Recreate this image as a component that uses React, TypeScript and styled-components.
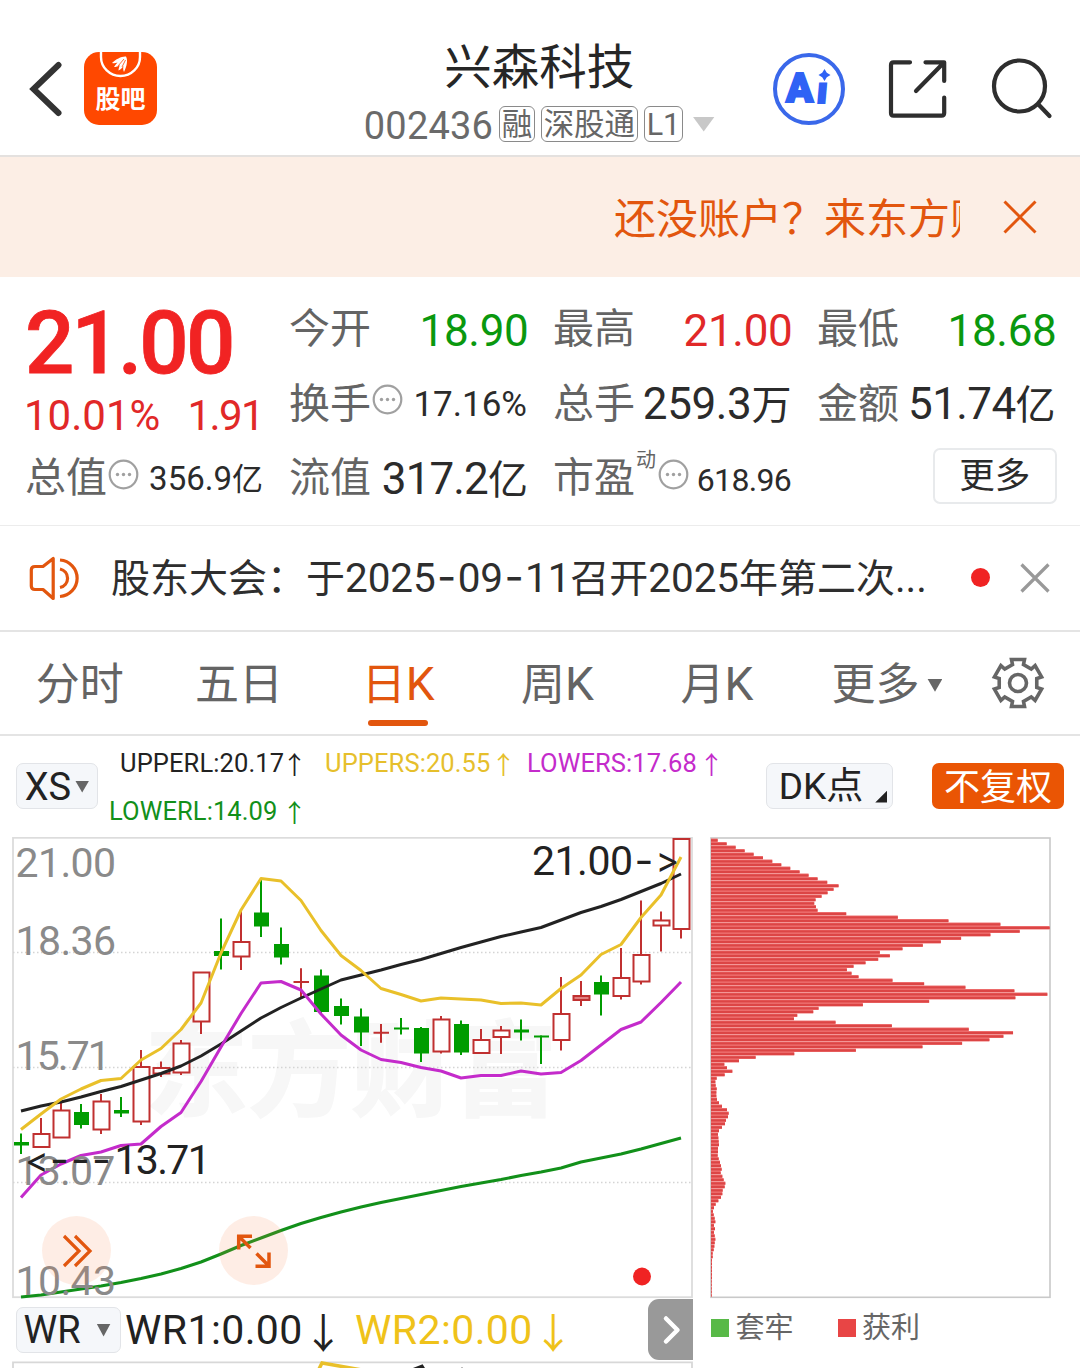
import React from "react";
import styled, { createGlobalStyle } from "styled-components";

const ACCENT = "#e2560e";
const RED = "#e12828";
const GREEN = "#0a980e";
const INK = "#2b2b2b";
const MUTED = "#646464";

const Global = createGlobalStyle`
  * { box-sizing: border-box; }
  body { margin: 0; background: #fff; overflow: hidden; }
`;

const Page = styled.div`
  width: 1080px;
  height: 1368px;
  overflow: hidden;
  background: #fff;
  color: ${INK};
  font-family: Roboto, "Noto Sans CJK SC", sans-serif;
  white-space: nowrap;
`;

const Icon = styled.svg`
  display: block;
  flex: none;
  fill: none;
`;

/* ---------- header ---------- */
const Header = styled.header`
  display: grid;
  grid-template-columns: 360px 357px 363px;
  height: 156.5px;
  border-bottom: 2px solid #e4e1df;
`;
const HeaderLeft = styled.div`
  display: flex;
  align-items: center;
  gap: 22px;
  padding: 23px 0 0 28px;
`;
const HeaderRight = styled.div`
  display: flex;
  align-items: center;
  gap: 42px;
  padding: 23px 0 0 54.5px;
`;
const TitleBlock = styled.div`
  display: flex;
  flex-direction: column;
  align-items: center;
  padding: 38px 0 0 1.5px;
`;
const Title = styled.h1`
  margin: 0;
  font-size: 47.5px;
  font-weight: 400;
  line-height: 61px;
  color: #262626;
`;
const CodeRow = styled.div`
  display: flex;
  align-items: center;
  height: 50px;
  gap: 5.5px;
`;
const Code = styled.span`
  font-size: 38px;
  line-height: 50px;
  padding-top: 3px;
  color: #6a6a6a;
  letter-spacing: 0.2px;
`;
const Tag = styled.span`
  height: 36px;
  padding: 0 2px;
  border: 1.5px solid #8a8a8a;
  border-radius: 6px;
  font-size: 30.5px;
  line-height: 36px;
  color: #666;
`;
const Triangle = styled.i<{ $w: number; $h: number; $c: string; $ml?: number }>`
  flex: none;
  width: ${(p) => p.$w}px;
  height: ${(p) => p.$h}px;
  margin-left: ${(p) => p.$ml ?? 0}px;
  background: ${(p) => p.$c};
  clip-path: polygon(0 0, 100% 0, 50% 100%);
`;

/* ---------- banner ---------- */
const Banner = styled.div`
  display: flex;
  align-items: center;
  height: 120px;
  padding-left: 614px;
  background: #fceee5;
`;
const BannerText = styled.div`
  width: 346px;
  margin-right: 43px;
  overflow: hidden;
  font-size: 42px;
  line-height: 60px;
  padding-top: 6px;
  color: ${ACCENT};
`;

/* ---------- quote ---------- */
const Quote = styled.section`
  display: grid;
  grid-template-columns: repeat(4, 238px);
  grid-template-rows: repeat(3, 74.5px);
  column-gap: 26px;
  height: 249.5px;
  padding: 17px 25px 0;
  border-bottom: 1.5px solid #ececec;
`;
const PriceCell = styled.div`
  grid-row: span 2;
  display: flex;
  flex-direction: column;
`;
const Price = styled.div`
  height: 97px;
  font-size: 87px;
  font-weight: 500;
  line-height: 98px;
  letter-spacing: -2.9px;
  margin-left: 0;
  color: #f12323;
  -webkit-text-stroke: 0.8px #f12323;
`;
const Change = styled.div`
  display: flex;
  justify-content: space-between;
  font-size: 42px;
  line-height: 50px;
  margin-left: -1px;
  color: ${RED};
`;
const ChangeAmount = styled.span`
  letter-spacing: -1.6px;
`;
const Cell = styled.div`
  display: flex;
  align-items: center;
  height: 74.5px;
`;
const Label = styled.span`
  font-size: 41px;
  line-height: 60px;
  padding-bottom: 3px;
  color: ${MUTED};
`;
const Value = styled.span<{ $size?: number; $c?: string; $ls?: number }>`
  margin-left: auto;
  margin-right: ${(p) => (p.$c ? -1.5 : 0)}px;
  font-size: ${(p) => p.$size ?? 44}px;
  line-height: 60px;
  letter-spacing: ${(p) => p.$ls ?? 0}px;
  color: ${(p) => p.$c ?? INK};
`;
const Unit = styled.span<{ $size: number }>`
  font-size: ${(p) => p.$size}px;
`;
const Sup = styled.sup`
  align-self: flex-start;
  font-size: 20px;
  line-height: 24px;
  margin: 5px 1px 0 1px;
  color: ${MUTED};
`;
const DotsIcon = styled(Icon)`
  margin: -11px 0 0 1px;
`;
const MoreButton = styled.button`
  width: 124.5px;
  height: 56px;
  margin: -7px -2px 0 auto;
  padding: 0;
  flex: none;
  border: 2px solid #e8eaec;
  border-radius: 7px;
  background: #fff;
  font: 35.5px/50px Roboto, "Noto Sans CJK SC", sans-serif;
  color: ${INK};
`;

/* ---------- news ---------- */
const News = styled.section`
  display: flex;
  align-items: center;
  height: 105.5px;
  padding-left: 28px;
  border-bottom: 2px solid #e4e4e4;
`;
const NewsText = styled.div`
  width: 870px;
  padding-left: 29px;
  font-size: 39px;
  line-height: 60px;
  color: #2e2e2e;
`;
const Num = styled.span`
  font-size: 40.5px;
  letter-spacing: -0.1px;
`;
const Dash = styled.span`
  font-family: Inter, sans-serif;
  font-size: 42px;
  padding: 0 1.4px;
`;
const RedDot = styled.i`
  width: 19px;
  height: 19px;
  margin: 0 30px 0 19px;
  border-radius: 50%;
  background: #f02323;
`;

/* ---------- tabs ---------- */
const Tabs = styled.nav`
  display: flex;
  align-items: center;
  height: 104.5px;
  border-bottom: 2px solid #e4e4e4;
`;
const Tab = styled.div<{ $active?: boolean; $w?: number }>`
  display: flex;
  flex-direction: column;
  align-items: center;
  justify-content: flex-end;
  width: ${(p) => p.$w ?? 159.3}px;
  height: 102px;
  font-size: 44px;
  line-height: 60px;
  color: ${(p) => (p.$active ? ACCENT : MUTED)};
  &::after {
    content: "";
    width: 60px;
    height: 6px;
    margin: 4.5px 0 8px;
    border-radius: 3px;
    background: ${(p) => (p.$active ? ACCENT : "transparent")};
  }
`;
const TabLabel = styled.span`
  display: flex;
  align-items: center;
  gap: 8px;
`;
const Latin = styled.span`
  font-size: 46px;
`;
const GearIcon = styled(Icon)`
  margin-left: 14px;
`;

/* ---------- indicator bar ---------- */
const IndicatorBar = styled.section`
  display: flex;
  height: 101px;
  padding: 0 16px;
`;
const Chip = styled.button<{ $w: number; $size: number; $solid?: boolean; $gap?: number; $pad?: number }>`
  display: flex;
  align-items: center;
  justify-content: center;
  gap: ${(p) => p.$gap ?? 4}px;
  flex: none;
  width: ${(p) => p.$w}px;
  height: 46px;
  padding: ${(p) => (p.$solid ? 3 : 1)}px ${(p) => p.$pad ?? 0}px 0 0;
  border: ${(p) => (p.$solid ? "0" : "1.5px solid #e2e4e8")};
  border-radius: 7px;
  background: ${(p) => (p.$solid ? "#ea5504" : "#f5f7fa")};
  color: ${(p) => (p.$solid ? "#fff" : "#222")};
  font: ${(p) => p.$size}px/44px Roboto, "Noto Sans CJK SC", sans-serif;
`;
const ChipSlot = styled.div<{ $ml?: number }>`
  padding-top: 27px;
  margin-left: ${(p) => p.$ml ?? 0}px;
`;
const Corner = styled.i`
  align-self: flex-end;
  width: 12px;
  height: 12px;
  margin: 0 -7px 5.5px 8px;
  background: #222;
  clip-path: polygon(100% 0, 100% 100%, 0 100%);
`;
const Legends = styled.div`
  display: flex;
  flex-wrap: wrap;
  align-content: flex-start;
  width: 668px;
  padding: 3px 0 0 11px;
`;
const Legend = styled.span<{ $c: string; $w: number; $ml?: number }>`
  display: flex;
  width: ${(p) => p.$w}px;
  margin-left: ${(p) => p.$ml ?? 0}px;
  color: ${(p) => p.$c};
  font-size: 25.5px;
  line-height: 48px;
  letter-spacing: 0.1px;
`;
const LegendText = styled.span<{ $w: number }>`
  width: ${(p) => p.$w}px;
`;
const Arrow = styled.span<{ $size: number }>`
  font-family: "Noto Sans CJK SC", sans-serif;
  font-size: ${(p) => p.$size}px;
`;

/* ---------- charts ---------- */
const Charts = styled.section`
  display: flex;
  gap: 17px;
`;
const LeftPane = styled.div`
  width: 693px;
`;
const ChartBox = styled.div`
  position: relative;
  height: 461.5px;
  padding-left: 12px;
`;
const RoundButton = styled.button<{ $x: number }>`
  position: absolute;
  left: ${(p) => p.$x}px;
  top: 379px;
  display: flex;
  align-items: center;
  justify-content: center;
  width: 69px;
  height: 69px;
  padding: 0;
  border: 0;
  border-radius: 50%;
  background: rgba(250, 130, 70, 0.14);
`;
const WrRow = styled.div`
  display: flex;
  align-items: center;
  height: 62px;
  padding-left: 16px;
`;
const WrValue = styled.div<{ $c: string; $w: number }>`
  display: flex;
  width: ${(p) => p.$w}px;
  padding-left: 4px;
  font-size: 41px;
  line-height: 54px;
  letter-spacing: 0.4px;
  color: ${(p) => p.$c};
`;
const NextButton = styled.button`
  display: flex;
  align-items: center;
  justify-content: center;
  width: 45px;
  height: 61px;
  margin-left: auto;
  padding: 0 0 0 3px;
  border: 0;
  border-radius: 11px 0 0 11px;
  background: #999;
`;
const SideLegend = styled.div`
  display: flex;
  align-items: center;
  gap: 44px;
  height: 58px;
  padding-left: 1px;
`;
const SideItem = styled.span<{ $c: string }>`
  display: flex;
  align-items: center;
  gap: 6.5px;
  font-size: 29px;
  line-height: 40px;
  color: #666;
  &::before {
    content: "";
    width: 18px;
    height: 18px;
    background: ${(p) => p.$c};
  }
`;

/* [up, high, top, bottom, low] in chart pixels */
const candles: [number, number, number, number, number][] = [
  [0, 1133.5, 1142, 1145.5, 1154], [1, 1118, 1134, 1147, 1147], [1, 1102, 1110.5, 1137.5, 1138],
  [0, 1104, 1112, 1125, 1128.5], [1, 1094, 1101.5, 1129.5, 1134], [0, 1097, 1110, 1113.5, 1117],
  [1, 1050, 1067, 1121.5, 1125], [1, 1061.5, 1068, 1073.5, 1077], [1, 1040, 1043.5, 1072.5, 1075],
  [1, 972, 972.5, 1021.5, 1034], [0, 918.5, 951, 956, 969.5], [1, 911, 942, 956.5, 970],
  [0, 880, 912.5, 926.5, 937], [0, 927.5, 944, 957.5, 964.5], [1, 968.5, 981.5, 982.5, 997],
  [0, 969.5, 975.5, 1012, 1013], [0, 998.5, 1006, 1016, 1024.5], [0, 1008.5, 1016.5, 1032.5, 1046],
  [1, 1024, 1032, 1033.5, 1042.5], [0, 1018, 1027.5, 1029.5, 1034.5], [0, 1027, 1028, 1053.5, 1062],
  [1, 1016, 1019.5, 1051.5, 1053.5], [0, 1020.5, 1024, 1052.5, 1055], [1, 1029, 1040, 1053, 1054],
  [1, 1026, 1030.5, 1037, 1054], [0, 1019.5, 1029.5, 1032.5, 1040.5], [0, 1035.5, 1035.5, 1037.5, 1064],
  [1, 977, 1014, 1040, 1050.5], [1, 981, 996, 1000, 1006], [0, 975.5, 982, 994.5, 1015.5],
  [1, 948, 978, 996, 999.5], [1, 900.5, 955, 981.5, 984.5], [1, 911.5, 920.5, 925.5, 951.5],
  [1, 838.5, 839, 929, 938.5],
];

const upperS = [1129.5, 1114, 1099, 1089, 1080.5, 1078.5, 1060, 1048.5, 1029.5, 1003, 953, 910, 878.5, 881, 900.5, 930.5, 955.5, 970.5, 988.5, 994.5, 1001, 998, 999, 1000, 1003.5, 1003, 1005, 988.5, 975, 954.5, 944.5, 917.5, 895, 857];
const upperL = [1111, 1106, 1102, 1097, 1091.5, 1086.5, 1080, 1073.5, 1066, 1056, 1044, 1031, 1018, 1007.5, 998, 989, 980, 975, 970, 964.5, 959.5, 953.5, 947.5, 942, 936.5, 932, 927.5, 920, 912.5, 906.5, 899.5, 891.5, 883.5, 874];
const lowerS = [1197.5, 1175, 1164, 1155.5, 1152, 1145.5, 1144, 1126.5, 1112.5, 1081.5, 1047, 1013.5, 983, 981.5, 990, 1014, 1035, 1050, 1059.5, 1062.5, 1067.5, 1071, 1078, 1075.5, 1075.5, 1071, 1074, 1072.5, 1060.5, 1045, 1029.5, 1022, 1002.5, 982];
const lowerL = [1297, 1295, 1292, 1289, 1286, 1282.5, 1278.5, 1274, 1268.5, 1262, 1254, 1245.5, 1238, 1230.5, 1223.5, 1217.5, 1212, 1207, 1202.5, 1198.5, 1194.5, 1190.5, 1186.5, 1183, 1179.5, 1175.5, 1172, 1168, 1162, 1158, 1154, 1149, 1143.5, 1138];

const toPoints = (ys: number[]) => ys.map((y, i) => `${21 + i * 20},${y}`).join(" ");

/* cost distribution: bar ends on a 1018-unit scale starting at 33 */
const chips = [53, 80, 107, 134, 161, 189, 217, 244, 271, 299, 326, 353, 382, 416, 401, 383, 365, 347, 343, 348, 353, 439, 594, 746, 902, 1050, 960, 872, 784, 723, 669, 608, 540, 570, 535, 497, 461, 441, 455, 476, 578, 673, 797, 944, 1043, 947, 688, 489, 356, 340, 292, 282, 407, 576, 807, 940, 911, 869, 787, 668, 468, 283, 167, 117, 73, 81, 97, 74, 50, 46, 47, 50, 49, 49, 51, 57, 66, 81, 86, 84, 78, 75, 66, 57, 54, 55, 56, 57, 54, 54, 53, 56, 60, 63, 65, 62, 67, 71, 76, 74, 68, 67, 63, 55, 47, 42, 39, 41, 44, 46, 42, 45, 42, 44, 46, 44, 43, 41, 38, 38, 36, 36, 36, 36, 36, 36, 35, 35, 35, 35, 35];

/* [label, baseline, letter spacing] */
const axis: [string, number, number][] = [
  ["21.00", 877, -0.6],
  ["18.36", 954.5, -0.6],
  ["15.71", 1069.5, -1.9],
  ["13.07", 1184.5, -0.8],
  ["10.43", 1295, -0.6],
];

const gearPath = (() => {
  const pts: string[] = [];
  for (let k = 0; k < 6; k++) {
    const a = ((k * 60 - 90) * Math.PI) / 180;
    for (const [u, v] of [[18.5, -5.5], [23.5, -6.5], [23.5, 6.5], [18.5, 5.5]]) {
      pts.push(`${(27 + u * Math.cos(a) - v * Math.sin(a)).toFixed(2)} ${(27 + u * Math.sin(a) + v * Math.cos(a)).toFixed(2)}`);
    }
  }
  return `M${pts.join("L")}Z`;
})();

const Dots = () => (
  <DotsIcon width="31" height="31" viewBox="0 0 31 31">
    <circle cx="15.5" cy="15.5" r="13.8" stroke="#a0a0a0" strokeWidth="2.2" />
    {[9.5, 15.5, 21.5].map((x) => <circle key={x} cx={x} cy="15.5" r="1.7" fill="#a0a0a0" />)}
  </DotsIcon>
);

const Cross = ({ size, color, width }: { size: number; color: string; width: number }) => (
  <Icon width={size} height={size} viewBox={`0 0 ${size} ${size}`} stroke={color} strokeWidth={width}>
    <path d={`M1.5 1.5L${size - 1.5} ${size - 1.5}M${size - 1.5} 1.5L1.5 ${size - 1.5}`} />
  </Icon>
);

const KChart = () => (
  <Icon width="681" height="461.5" viewBox="12 837 681 461.5">
    <text x="145" y="1108" fontSize="103" fontWeight="700" fill="#f7f7f7" stroke="#f7f7f7" strokeWidth="2" fontFamily="Noto Sans CJK SC">东方财富</text>
    <rect x="13" y="837.8" width="679" height="459.4" stroke="#dcdcdc" strokeWidth="1.8" />
    {[952.5, 1067.5, 1182.5].map((y) => (
      <path key={y} d={`M13 ${y}H692`} stroke="#d4d4d4" strokeWidth="1.5" strokeDasharray="1.5 2.5" />
    ))}
    {candles.map(([up, hi, top, bot, lo], i) => {
      const x = 21 + i * 20;
      return up ? (
        <g key={i} stroke="#c03030" strokeWidth="2">
          <path d={`M${x} ${hi}V${top}M${x} ${bot}V${lo}`} />
          {bot - top < 2 ? (
            <path d={`M${x - 7.5} ${(top + bot) / 2}H${x + 8}M${x} ${hi}V${lo}`} />
          ) : (
            <rect x={x - 7.5} y={top} width="16" height={bot - top} fill={bot - top < 5 ? "#e08080" : "#fff"} />
          )}
        </g>
      ) : (
        <g key={i} fill="#009c00">
          <rect x={x - 1} y={hi} width="2" height={lo - hi} />
          <rect x={x - 7} y={top} width="15" height={bot - top} />
        </g>
      );
    })}
    <g strokeWidth="3" strokeLinejoin="round">
      <polyline points={toPoints(upperL)} stroke="#222" />
      <polyline points={toPoints(upperS)} stroke="#e9c02a" />
      <polyline points={toPoints(lowerS)} stroke="#c42bcb" />
      <polyline points={toPoints(lowerL)} stroke="#12901a" />
    </g>
    <g fontSize="41" fontFamily="Roboto">
      {axis.map(([t, y, ls]) => <text key={t} x="15.5" y={y} fill="#8a8a8a" letterSpacing={ls}>{t}</text>)}
      <g fill="#222">
        <text x="532" y="875" letterSpacing="-0.5">
          21.00<tspan fontFamily="Inter" x="634.5">-</tspan><tspan fontFamily="Inter" fontSize="36" x="655.5" y="873">&gt;</tspan>
        </text>
        <text y="1174.500">
          <tspan fontFamily="Inter" fontSize="36" x="25" y="1172.500">&lt;</tspan><tspan fontFamily="Inter" y="1173.500" x="50 71 92">---</tspan><tspan x="114.500" y="1174" letterSpacing="-1.7">13.71</tspan>
        </text>
      </g>
    </g>
    <circle cx="642" cy="1276.5" r="9" fill="#f02323" />
  </Icon>
);

const ChipChart = () => (
  <Icon width="342" height="461.5" viewBox="710 837 342 461.5">
    <rect x="711" y="838" width="339" height="459.3" stroke="#c9c9c9" strokeWidth="1.6" />
    {chips.map((end, i) => {
      const y = 838.5 + i * 3.5;
      const w = (end - 33) / 3.003;
      return (
        <g key={i}>
          <rect x="711" y={y} width={w} height="3.5" fill="#f07474" />
          <rect x="711" y={y + 0.8} width={w} height="2.2" fill="#dc4545" />
        </g>
      );
    })}
  </Icon>
);

export default function App() {
  return (
    <Page>
      <Global />
      <Header>
        <HeaderLeft>
          <Icon width="34" height="58" viewBox="28 60 34 58" stroke="#333" strokeWidth="6" strokeLinecap="round">
            <path d="M58.5 65L33.5 89L58.5 113" strokeLinejoin="miter" />
          </Icon>
          <Icon width="73" height="73" viewBox="0 0 73 73">
            <defs><clipPath id="tile"><rect width="73" height="73" rx="15" /></clipPath></defs>
            <g clipPath="url(#tile)">
              <rect width="73" height="73" fill="#ff4800" />
              <path d="M17 -2V5A19.5 19 0 0 0 56 5V-2" stroke="#fff" strokeWidth="2.4" />
              <path d="M28 11C32 7 38 4 42 4.500C44 8 43 14 40 20C39 18 39 16 39.500 14C38 16 36.500 17.500 34.500 18.500C34.500 17 35 15 36 13C34 14.500 32 15 30 15C31 13.500 32 12 33.500 10.500C31.500 11.300 30 11.500 28 11Z" fill="#fff" />
              <path d="M34 14L40 7M38 15L41.500 8" stroke="#ff4800" strokeWidth="0.8" />
            </g>
            <text x="36.500" y="56" textAnchor="middle" fontSize="25" fontWeight="700" fill="#fff" fontFamily="Noto Sans CJK SC">股吧</text>
          </Icon>
        </HeaderLeft>
        <TitleBlock>
          <Title>兴森科技</Title>
          <CodeRow>
            <Code>002436</Code>
            <Tag>融</Tag>
            <Tag>深股通</Tag>
            <Tag>L1</Tag>
            <Triangle $w={22} $h={15} $c="#c8c8c8" $ml={4} />
          </CodeRow>
        </TitleBlock>
        <HeaderRight>
          <Icon width="74" height="74" viewBox="771.500 52 74 74">
            <circle cx="808.500" cy="89" r="34" stroke="#3a68ea" strokeWidth="4" />
            <g fill="#2f62f5" stroke="#2f62f5" fontFamily="Roboto" fontWeight="900" fontSize="40">
              <text x="785.500" y="101.500" strokeWidth="2">A</text>
              <text transform="translate(815.500 103) skewX(-5)" fontSize="37" strokeWidth="2">ı</text>
              <path d="M824 69L826.300 72.700L830 75L826.300 77.300L824 81L821.700 77.300L818 75L821.700 72.700Z" stroke="none" />
            </g>
          </Icon>
          <Icon width="60" height="60" viewBox="887 59 60 60" stroke="#2e2e2e" strokeWidth="4.200" strokeLinecap="round" strokeLinejoin="round">
            <path d="M909 62.300H892.500Q890 62.300 890 65V113Q890 115.700 892.500 115.700H940.500Q943.200 115.700 943.200 113V97.500M924.500 62.300H943.200V81M942 63.500L915 91" />
          </Icon>
          <Icon width="64" height="64" viewBox="989 57 64 64" stroke="#2e2e2e" strokeWidth="4.200" strokeLinecap="round">
            <circle cx="1018.500" cy="86" r="25.500" />
            <path d="M1037.500 104.500L1048.500 116" />
          </Icon>
        </HeaderRight>
      </Header>

      <Banner>
        <BannerText>还没账户？来东方财富</BannerText>
        <Cross size={34} color={ACCENT} width={3} />
      </Banner>

      <Quote>
        <PriceCell>
          <Price>21.00</Price>
          <Change><span>10.01%</span><ChangeAmount>1.91</ChangeAmount></Change>
        </PriceCell>
        <Cell><Label>今开</Label><Value $c={GREEN} $ls={-0.3}>18.90</Value></Cell>
        <Cell><Label>最高</Label><Value $c={RED} $ls={-0.3}>21.00</Value></Cell>
        <Cell><Label>最低</Label><Value $c={GREEN} $ls={-0.3}>18.68</Value></Cell>
        <Cell><Label>换手</Label><Dots /><Value $size={35}>17.16%</Value></Cell>
        <Cell><Label>总手</Label><Value $ls={-0.4}>259.3<Unit $size={40}>万</Unit></Value></Cell>
        <Cell><Label>金额</Label><Value $ls={-0.6}>51.74<Unit $size={40}>亿</Unit></Value></Cell>
        <Cell><Label>总值</Label><Dots /><Value $size={33}>356.9<Unit $size={31}>亿</Unit></Value></Cell>
        <Cell><Label>流值</Label><Value $ls={-0.9}>317.2<Unit $size={40}>亿</Unit></Value></Cell>
        <Cell><Label>市盈</Label><Sup>动</Sup><Dots /><Value $size={32} $ls={-0.7}>618.96</Value></Cell>
        <Cell><MoreButton>更多</MoreButton></Cell>
      </Quote>

      <News>
        <Icon width="54" height="48" viewBox="28 554 54 48" stroke={ACCENT} strokeWidth="3.200">
          <path d="M53.200 558.500V598.500L43 589.500H35Q31.300 589.500 31.300 586V570Q31.300 566.500 35 566.500H43Z" strokeLinejoin="round" />
          <path d="M60 569A9.800 9.500 0 0 1 60 587.500M60 560A18.500 18.300 0 0 1 60 596.500" />
        </Icon>
        <NewsText>
          股东大会：于<Num>2025<Dash>-</Dash>09<Dash>-</Dash>11</Num>召开<Num>2025</Num>年第二次<Num>...</Num>
        </NewsText>
        <RedDot />
        <Cross size={30} color="#999" width={3.2} />
      </News>

      <Tabs>
        <Tab><TabLabel>分时</TabLabel></Tab>
        <Tab><TabLabel>五日</TabLabel></Tab>
        <Tab $active><span>日<Latin>K</Latin></span></Tab>
        <Tab><span>周<Latin>K</Latin></span></Tab>
        <Tab><span>月<Latin>K</Latin></span></Tab>
        <Tab $w={181}><TabLabel>更多<Triangle $w={15} $h={13} $c="#666" /></TabLabel></Tab>
        <GearIcon width="54" height="54" viewBox="0 0 54 54" stroke="#666" strokeWidth="3.600">
          <path d={gearPath} />
          <circle cx="27" cy="27" r="8.500" />
        </GearIcon>
      </Tabs>

      <IndicatorBar>
        <ChipSlot><Chip $w={82} $size={38}>XS<Triangle $w={14} $h={12} $c="#666" /></Chip></ChipSlot>
        <Legends>
          <Legend $c="#222" $w={205} $ml={11}><LegendText $w={162}>UPPERL:20.17</LegendText><Arrow $size={25}>↑</Arrow></Legend>
          <Legend $c="#e6bf2c" $w={202}><LegendText $w={166}>UPPERS:20.55</LegendText><Arrow $size={25}>↑</Arrow></Legend>
          <Legend $c="#c42bcb" $w={200}><LegendText $w={172}>LOWERS:17.68</LegendText><Arrow $size={25}>↑</Arrow></Legend>
          <Legend $c="#12901a" $w={205}><LegendText $w={173}>LOWERL:14.09</LegendText><Arrow $size={25}>↑</Arrow></Legend>
        </Legends>
        <ChipSlot><Chip $w={127} $size={37}>DK点<Corner /></Chip></ChipSlot>
        <ChipSlot $ml={39}><Chip $w={132} $size={36} $solid>不复权</Chip></ChipSlot>
      </IndicatorBar>

      <Charts>
        <LeftPane>
          <ChartBox>
            <KChart />
            <RoundButton $x={42}>
              <Icon width="32" height="36" viewBox="63 1233 32 36" stroke={ACCENT} strokeWidth="3.200">
                <path d="M66 1236L81 1251L66 1266M77 1236L92 1251L77 1266" />
              </Icon>
            </RoundButton>
            <RoundButton $x={219}>
              <Icon width="38" height="38" viewBox="234.500 1232 38 38" stroke={ACCENT} strokeWidth="3.500">
                <path d="M251.500 1236.200H238.200V1249.500M239 1237L250 1248M255 1266.200H268.500V1252.500M268 1265.500L256 1253.500" />
              </Icon>
            </RoundButton>
          </ChartBox>
          <WrRow>
            <Chip $w={105} $size={38} $gap={16} $pad={3}>WR<Triangle $w={14} $h={13} $c="#666" /></Chip>
            <WrValue $c="#222" $w={230}>WR1:0.00<Arrow $size={41}>↓</Arrow></WrValue>
            <WrValue $c="#efc21a" $w={240}>WR2:0.00<Arrow $size={41}>↓</Arrow></WrValue>
            <NextButton>
              <Icon width="20" height="32" viewBox="0 0 20 32" stroke="#fff" strokeWidth="4.500" strokeLinecap="round" strokeLinejoin="round">
                <path d="M4 4.500L15.500 16L4 27.500" />
              </Icon>
            </NextButton>
          </WrRow>
          <Icon width="693" height="10" viewBox="0 1360 693 10">
            <path d="M13 1370V1361.300H692V1370" stroke="#d8d8d8" strokeWidth="1.800" />
            <path d="M318 1370L322 1362L362 1369" stroke="#e9c02a" strokeWidth="3.500" />
            <path d="M412 1369L422 1365L425 1370" stroke="#222" strokeWidth="3" />
            <path d="M462 1366.500V1370" stroke="#555" strokeWidth="1.500" />
          </Icon>
        </LeftPane>
        <div>
          <ChipChart />
          <SideLegend>
            <SideItem $c="#58b947">套牢</SideItem>
            <SideItem $c="#e84545">获利</SideItem>
          </SideLegend>
        </div>
      </Charts>
    </Page>
  );
}
